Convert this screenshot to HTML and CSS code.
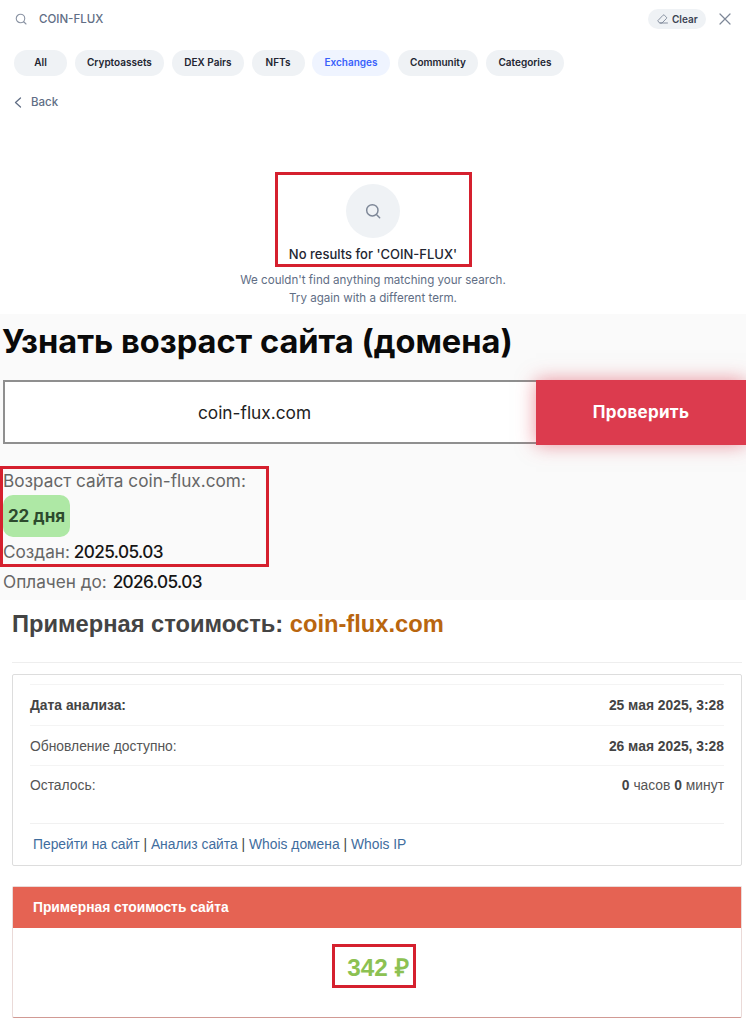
FILE: index.html
```html
<!DOCTYPE html>
<html lang="ru">
<head>
    <meta charset="UTF-8">
    <meta name="viewport" content="width=device-width, initial-scale=1.0">
    <title>COIN-FLUX</title>
    <link rel="stylesheet" href="styles.css">
</head>
<body>
    <section class="search">
        <div class="search-bar">
            <svg class="search-icon" width="12" height="12" viewBox="0 0 24 24" fill="none" stroke="#8a93a3" stroke-width="2.2" stroke-linecap="round"><circle cx="11" cy="11" r="8.5"/><path d="M17.5 17.5L22 22"/></svg>
            <span class="search-term">COIN-FLUX</span>
            <span class="clear">
                <svg width="13" height="12" viewBox="0 0 24 24" fill="none" stroke="#7d8797" stroke-width="1.8" stroke-linejoin="round" stroke-linecap="round"><path d="M3 15L13 4.5a2 2 0 0 1 2.8 0l4 3.8a2 2 0 0 1 0 2.8L11 20H7z"/><path d="M7 20h15"/></svg>
                Clear
            </span>
            <svg class="close" width="12" height="12" viewBox="0 0 12 12" fill="none" stroke="#7d8797" stroke-width="1.2" stroke-linecap="round"><path d="M1 1l10 10M11 1L1 11"/></svg>
        </div>
        <div class="chips">
            <span class="chip chip-all">All</span>
            <span class="chip">Cryptoassets</span>
            <span class="chip">DEX Pairs</span>
            <span class="chip chip-nft">NFTs</span>
            <span class="chip active">Exchanges</span>
            <span class="chip">Community</span>
            <span class="chip">Categories</span>
        </div>
        <div class="back">
            <svg width="8" height="11" viewBox="0 0 8 11" fill="none" stroke="#616e85" stroke-width="1.3" stroke-linecap="round" stroke-linejoin="round"><path d="M6.5 1L1.5 5.5l5 4.5"/></svg>
            Back
        </div>
        <div class="empty">
            <div class="mark empty-mark">
                <div class="empty-circle">
                    <svg width="16" height="16" viewBox="0 0 24 24" fill="none" stroke="#7d8797" stroke-width="2.2" stroke-linecap="round"><circle cx="11" cy="11" r="8.5"/><path d="M17.5 17.5L22 22"/></svg>
                </div>
                <div class="empty-title">No results for 'COIN-FLUX'</div>
            </div>
            <p class="empty-text">We couldn't find anything matching your search.<br>Try again with a different term.</p>
        </div>
    </section>

    <section class="age">
        <h1>Узнать возраст сайта (домена)</h1>
        <div class="age-form">
            <div class="age-input">coin-flux.com</div>
            <div class="age-button">Проверить</div>
        </div>
        <div class="mark age-mark">
            <div class="age-line">Возраст сайта coin-flux.com:</div>
            <span class="age-badge">22 дня</span>
            <div class="age-line">Создан: <b>2025.05.03</b></div>
        </div>
        <div class="age-line age-paid">Оплачен до: <b>2026.05.03</b></div>
    </section>

    <section class="cost">
        <h2>Примерная стоимость: <span>coin-flux.com</span></h2>
        <hr>
        <div class="panel">
            <div class="row"><b>Дата анализа:</b><b>25 мая 2025, 3:28</b></div>
            <div class="row row-mid">Обновление доступно:<b>26 мая 2025, 3:28</b></div>
            <div class="row row-last">Осталось:<span><b>0</b> часов <b>0</b> минут</span></div>
            <div class="links"><a>Перейти на сайт</a> | <a>Анализ сайта</a> | <a>Whois домена</a> | <a>Whois IP</a></div>
        </div>
        <div class="price">
            <div class="price-head">Примерная стоимость сайта</div>
            <div class="price-body"><span class="mark price-mark">342 ₽</span></div>
        </div>
    </section>
</body>
</html>
```

FILE: styles.css
```css
* {
    box-sizing: border-box;
}
body {
    margin: 0;
    background: #fff;
    font-family: Inter, sans-serif;
    overflow-x: hidden;
}
.mark {
    border: 3px solid #d5202e;
}

/* search */
.search {
    height: 314px;
    padding: 9px 14px 0;
}
.search-bar {
    display: flex;
    align-items: center;
    height: 20px;
}
.search-icon {
    margin: 0 12px 0 1px;
}
.search-term {
    flex: 1;
    font-size: 11.5px;
    font-weight: 500;
    color: #616e85;
}
.clear {
    display: flex;
    align-items: center;
    gap: 3px;
    width: 58px;
    height: 20px;
    padding: 0 8px;
    border-radius: 10px;
    background: #eff2f5;
    font-size: 10px;
    font-weight: 600;
    color: #3b4252;
}
.close {
    margin: 0 1px 0 13px;
}
.chips {
    display: flex;
    gap: 7.5px;
    margin-top: 21px;
}
.chip {
    display: flex;
    align-items: center;
    justify-content: center;
    height: 26px;
    padding: 0 12.5px 2px;
    border-radius: 13px;
    background: #eff2f5;
    font-size: 10px;
    font-weight: 600;
    color: #222531;
}
.chip-all, .chip-nft {
    width: 53px;
    padding: 0 0 2px;
}
.chip.active {
    background: #eff4ff;
    color: #3861fb;
}
.back {
    display: flex;
    align-items: center;
    gap: 9px;
    margin-top: 17px;
    height: 18px;
    font-size: 11.5px;
    font-weight: 500;
    color: #616e85;
}
.empty {
    margin-top: 61px;
    text-align: center;
}
.empty-mark {
    width: 197px;
    height: 95px;
    margin: 0 auto;
    padding-top: 9px;
}
.empty-circle {
    display: flex;
    align-items: center;
    justify-content: center;
    width: 54px;
    height: 54px;
    margin: 0 auto;
    border-radius: 50%;
    background: #eff2f5;
}
.empty-title {
    margin-top: 8px;
    font-size: 13px;
    font-weight: 500;
    line-height: 17px;
    color: #222531;
}
.empty-text {
    margin: 5px 0 0;
    font-size: 11.6px;
    line-height: 17.5px;
    color: #616e85;
}

/* age */
.age {
    height: 286px;
    padding-top: 7px;
    background: #fafafa;
}
h1 {
    margin: 0 0 0 2px;
    font-size: 32.6px;
    line-height: 40px;
    font-weight: 700;
    color: #0a0a0a;
}
.age-form {
    display: flex;
    margin: 19px 0 0 3px;
}
.age-input {
    width: 533px;
    height: 64px;
    padding-right: 32px;
    border: 2px solid #8f8f8f;
    border-right: 0;
    background: #fff;
    text-align: center;
    line-height: 62px;
    font-size: 17.3px;
    color: #222;
}
.age-button {
    width: 210px;
    height: 65px;
    background: #dc3b4e;
    box-shadow: 0 0 18px rgba(220, 59, 78, .55);
    text-align: center;
    line-height: 65px;
    font-size: 17px;
    letter-spacing: .3px;
    font-weight: 700;
    color: #fff;
}
.age-mark {
    width: 269px;
    height: 101px;
    margin-top: 21px;
}
.age-line {
    font-size: 17.2px;
    line-height: 24px;
    color: #666;
}
.age-line b {
    margin-left: -1px;
    font-weight: 500;
    letter-spacing: -.6px;
    color: #151515;
}
.age-badge {
    display: block;
    width: 67px;
    height: 42px;
    margin: 2px 0 3px;
    border-radius: 10px;
    background: #aee8a5;
    text-align: center;
    line-height: 42px;
    font-size: 17px;
    font-weight: 700;
    color: #2d4a2d;
}
.age-paid {
    margin: 3px 0 0 3px;
}
.age-paid b {
    margin-left: 1px;
}

/* cost */
.cost {
    padding: 0 4px 0 12px;
    font-family: "Liberation Sans", Arial, sans-serif;
    color: #555;
}
h2 {
    margin: 0;
    padding-top: 9px;
    font-size: 23.7px;
    line-height: 30px;
    font-weight: 700;
    color: #444;
}
h2 span {
    color: #b9660f;
}
hr {
    height: 1px;
    margin: 23px 0 11px;
    border: 0;
    background: #eee;
}
.panel {
    height: 192px;
    padding: 9px 17px 0;
    border: 1px solid #ddd;
    border-radius: 2px;
    font-size: 13.85px;
}
.row {
    display: flex;
    justify-content: space-between;
    align-items: center;
    height: 41px;
    border-top: 1px solid #f4f4f4;
}
.row b {
    color: #444;
}
.row-mid {
    height: 40px;
}
.row-last {
    height: 59px;
    padding-bottom: 19px;
    border-bottom: 1px solid #f1f1f1;
}
.links {
    padding: 11px 0 0 3px;
    line-height: 18px;
    color: #444;
}
.links a {
    color: #3f6d9e;
}
.price {
    height: 132px;
    margin-top: 20px;
    border: 1px solid #eadad8;
    border-bottom-color: #d19a94;
    border-radius: 2px;
}
.price-head {
    height: 41px;
    padding-left: 20px;
    background: #e56353;
    line-height: 41px;
    font-size: 13.8px;
    font-weight: 700;
    color: #fff;
}
.price-body {
    padding: 16px 6px 0 0;
    text-align: center;
}
.price-mark {
    display: inline-block;
    width: 84px;
    height: 44px;
    padding: 2px 0 0 8px;
    line-height: 38px;
    font-size: 24.3px;
    font-weight: 700;
    color: #8cc152;
}
```
